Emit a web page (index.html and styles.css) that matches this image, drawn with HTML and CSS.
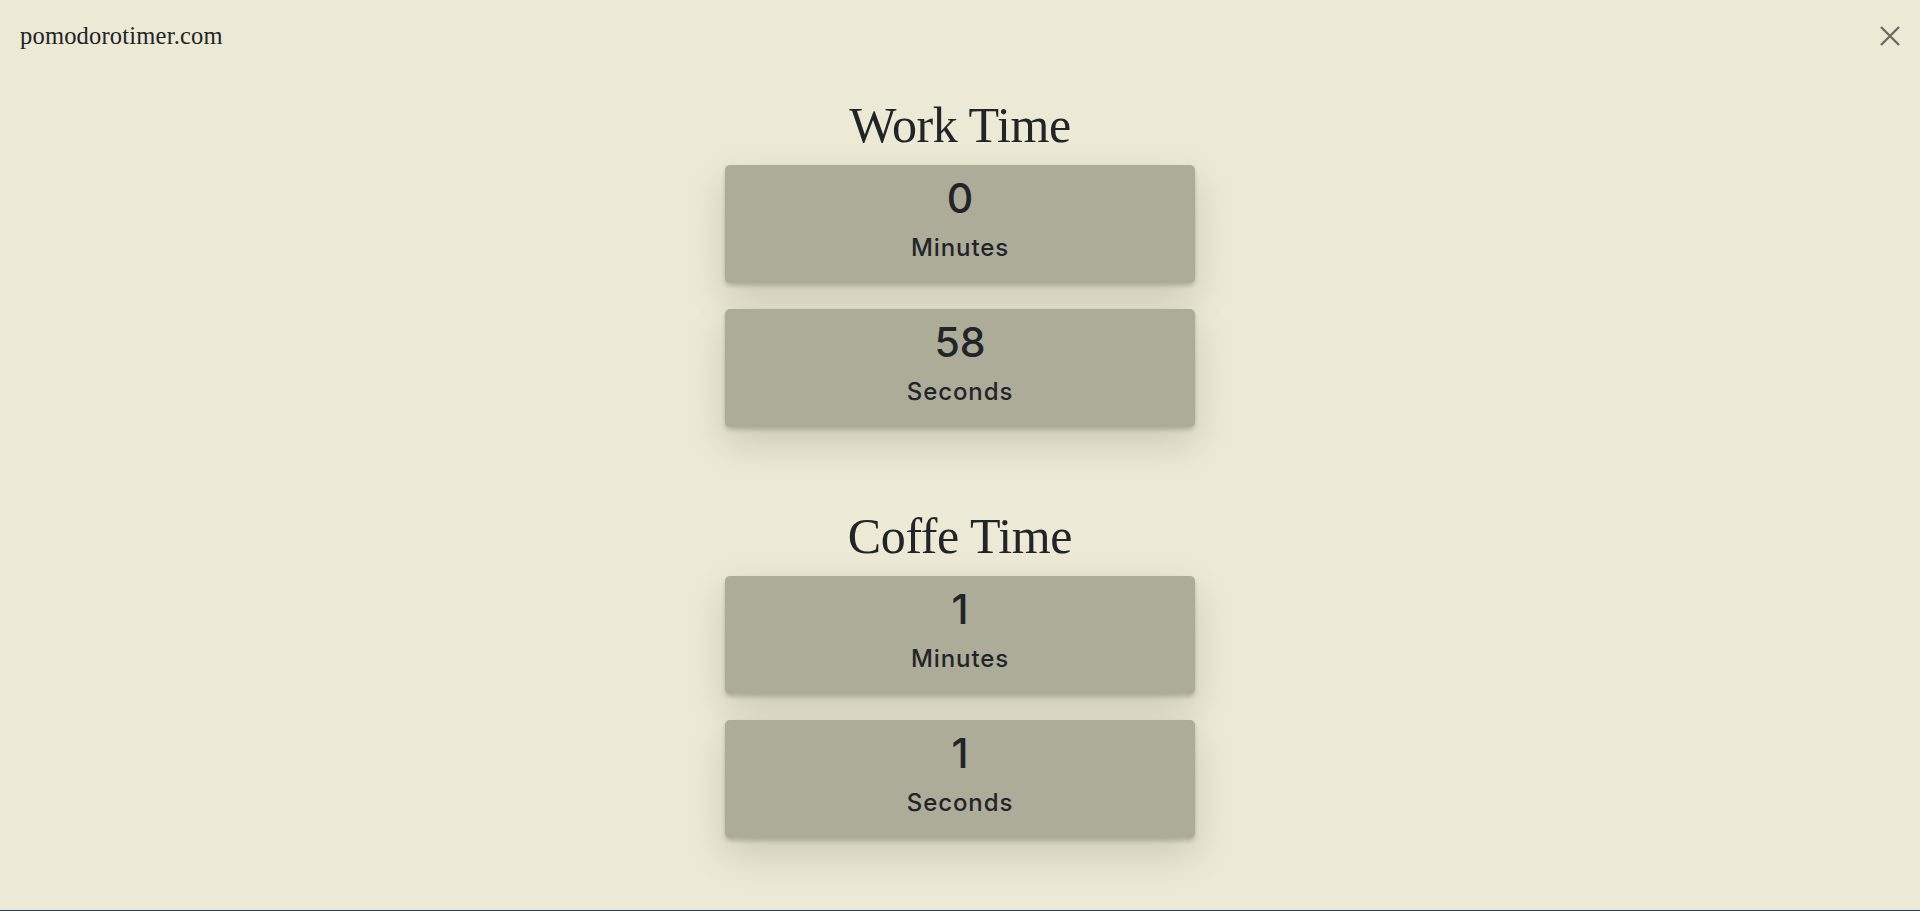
FILE: index.html
```html
<!DOCTYPE html>
<html lang="en">
<head>
<meta charset="utf-8">
<title>pomodorotimer.com</title>
<link rel="stylesheet" href="styles.css">
</head>
<body>
<div class="page">
  <header class="header">
    <div class="logo">pomodorotimer.com</div>
    <button class="close" aria-label="Close">
      <svg width="20" height="20" viewBox="0 0 20 20"><path d="M1 1 L19 19 M19 1 L1 19" stroke="#6b6a62" stroke-width="2.3" fill="none"/></svg>
    </button>
  </header>
  <main class="main">
    <section class="section">
      <h2 class="title">Work Time</h2>
      <div class="cards">
        <div class="card"><div class="num">0</div><div class="label">Minutes</div></div>
        <div class="card"><div class="num">58</div><div class="label">Seconds</div></div>
      </div>
    </section>
    <section class="section">
      <h2 class="title">Coffe Time</h2>
      <div class="cards">
        <div class="card"><div class="num">1</div><div class="label">Minutes</div></div>
        <div class="card"><div class="num">1</div><div class="label">Seconds</div></div>
      </div>
    </section>
  </main>
</div>
</body>
</html>
```

FILE: styles.css
```css
* { box-sizing: border-box; }
html, body { margin: 0; padding: 0; }
body {
  background: #ece9d4;
  color: #212529;
  font-family: "Liberation Serif", serif;
  overflow: hidden;
}
.page {
  height: 911px;
  border-bottom: 1px solid #2e3a63;
  display: flex;
  flex-direction: column;
}
.header {
  display: flex;
  justify-content: space-between;
  align-items: flex-start;
  padding: 21px 20px 0 20px;
  height: 50px;
}
.logo {
  font-family: "Liberation Serif", serif;
  font-size: 24.5px;
  line-height: 30px;
  color: #212529;
  letter-spacing: 0.2px;
}
.close {
  margin-top: 5px;
  width: 20px;
  height: 20px;
  padding: 0;
  border: 0;
  background: none;
  display: block;
}
.close svg { display: block; }
.main {
  display: flex;
  flex-direction: column;
  align-items: center;
  padding-top: 45px;
  gap: 79px;
}
.section {
  display: flex;
  flex-direction: column;
  align-items: center;
}
.title {
  margin: 0 0 10px 0;
  font-family: "Liberation Serif", serif;
  font-weight: 400;
  font-size: 50px;
  line-height: 60px;
  color: #212529;
  letter-spacing: -0.4px;
}
.cards {
  display: flex;
  flex-direction: column;
  gap: 26px;
}
.card {
  width: 470px;
  height: 118px;
  background: #adac99;
  border-radius: 5px;
  padding: 9px 0 19px;
  display: flex;
  flex-direction: column;
  align-items: center;
  box-shadow: 0 3px 4px rgba(0,0,0,0.18), 0 16px 40px rgba(0,0,0,0.14);
  font-family: Inter, "Open Sans", sans-serif;
}
.num {
  font-size: 41px;
  line-height: 48px;
  font-weight: 500;
  color: #212529;
}
.label {
  margin-top: 10px;
  font-size: 24px;
  line-height: 32px;
  font-weight: 500;
  letter-spacing: 0.9px;
  color: #212529;
}
```
